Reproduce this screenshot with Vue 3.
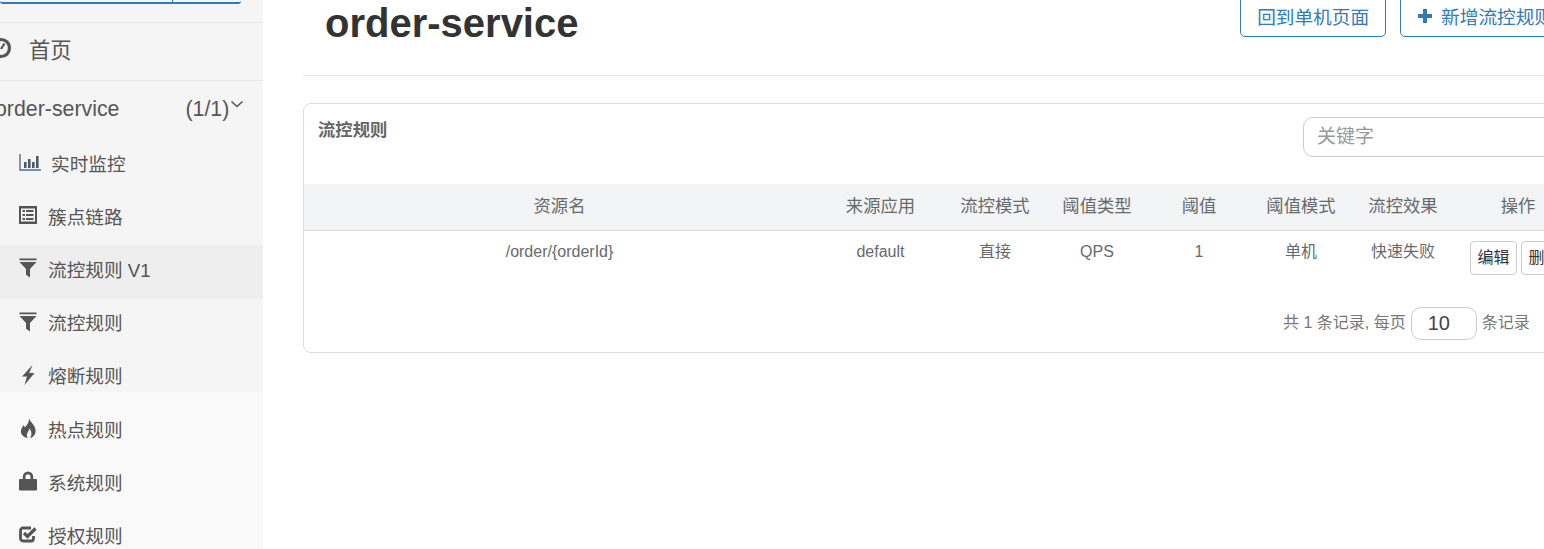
<script setup>
const nav = [
  { label: '实时监控', icon: 'stats' },
  { label: '簇点链路', icon: 'list' },
  { label: '流控规则 V1', icon: 'filter', active: true },
  { label: '流控规则', icon: 'filter' },
  { label: '熔断规则', icon: 'flash' },
  { label: '热点规则', icon: 'fire' },
  { label: '系统规则', icon: 'lock' },
  { label: '授权规则', icon: 'check' },
]
const cols = ['资源名', '来源应用', '流控模式', '阈值类型', '阈值', '阈值模式', '流控效果', '操作']
const row = ['/order/{orderId}', 'default', '直接', 'QPS', '1', '单机', '快速失败']
</script>

<template>
  <div class="page">
    <aside class="side">
      <div class="search"><span class="search-end"></span></div>
      <div class="home">
        <svg class="home-ico" viewBox="0 0 22 22"><circle cx="11" cy="11" r="8.500" fill="none" stroke="#555" stroke-width="3.200"/><path d="M11 12 L14.500 6.500" stroke="#555" stroke-width="2.200"/><circle cx="6.500" cy="10" r="1.200" fill="#555"/></svg>
        <span>首页</span>
      </div>
      <div class="app">
        <span>order-service</span>
        <span class="count">(1/1)</span>
        <svg class="chev" viewBox="0 0 14 8"><path d="M1.500 1.500 L7 6.500 L12.500 1.500" fill="none" stroke="#555" stroke-width="1.600"/></svg>
      </div>
      <div class="nav">
        <div v-for="n in nav" :key="n.label" class="item" :class="{ active: n.active, first: n.icon === 'stats' }">
          <span class="ico-box">
            <svg v-if="n.icon === 'stats'" viewBox="0 0 22 18" class="ico wide"><path d="M1 1 V17 H22" fill="none" stroke="#4a6f8f" stroke-width="1.400"/><path d="M5 9h2.600v6H5zM9 6h2.600v9H9zM13 9h2.600v6H13zM17 3h2.600v12H17z" fill="#4d5a68"/></svg>
            <svg v-else-if="n.icon === 'list'" viewBox="0 0 18 18" class="ico"><path fill-rule="evenodd" d="M0 0h18v18H0zM2 2.500v13h14v-13z" fill="#555"/><path d="M3.500 4h2.500v2H3.500zM7 4h7.500v2H7zM3.500 8h2.500v2H3.500zM7 8h7.500v2H7zM3.500 12h2.500v2H3.500zM7 12h7.500v2H7z" fill="#555"/></svg>
            <svg v-else-if="n.icon === 'filter'" viewBox="0 0 18 19" class="ico tall"><path d="M0.500 0h17v1.800H0.500zM0.500 3.500h17L11 10.500v8.500l-4-2.800V10.500z" fill="#555"/></svg>
            <svg v-else-if="n.icon === 'flash'" viewBox="0 0 18 20" class="ico tall"><path d="M13.500 0 L3 11.500 H8 L5.500 20 L15.500 8 H10.200z" fill="#555"/></svg>
            <svg v-else-if="n.icon === 'fire'" viewBox="0 0 18 21" class="ico tall"><path d="M10 0 C11 4.500 17 7 17 13.500 C17 18 13.500 21 11 21 C13.500 18 13 14 10.300 11 C10 14 7.800 15.500 7.800 18 C7.800 19.300 8.300 20.300 9 21 C4.500 20.500 1.500 17.500 1.500 14 C1.500 11 3.500 9.500 4.200 7.500 C5.200 8.200 5.500 9 5.700 10 C7.800 7.500 10.500 4.500 10 0z" fill="#555"/></svg>
            <svg v-else-if="n.icon === 'lock'" viewBox="0 0 18 19" class="ico tall"><path fill-rule="evenodd" d="M3.800 7.500V5.200a5.200 5.200 0 0 1 10.400 0v2.300h2.800a1 1 0 0 1 1 1V18a1 1 0 0 1-1 1H1a1 1 0 0 1-1-1V8.500a1 1 0 0 1 1-1zM6.500 7.500h5V5.200a2.500 2.500 0 0 0-5 0z" fill="#555"/></svg>
            <svg v-else viewBox="0 0 18 18" class="ico"><path d="M14.500 11v2.500a2.500 2.500 0 0 1-2.500 2.500H4a2.500 2.500 0 0 1-2.500-2.500V5.500A2.500 2.500 0 0 1 4 3h8" fill="none" stroke="#555" stroke-width="2.800"/><path d="M5 8 L8.500 11.500 L16.500 3.500" fill="none" stroke="#555" stroke-width="3.200"/></svg>
          </span>
          <span>{{ n.label }}</span>
        </div>
      </div>
    </aside>

    <main class="main">
      <header class="head">
        <h1 class="title">order-service</h1>
        <div class="actions">
          <button class="btn">回到单机页面</button>
          <button class="btn">
            <svg class="plus" viewBox="0 0 16 16"><path d="M6 1h4v5h5v4h-5v5H6v-5H1V6h5z" fill="#337ab7"/></svg>
            新增流控规则
          </button>
        </div>
      </header>

      <section class="card">
        <div class="card-top">
          <h2 class="card-title">流控规则</h2>
          <div class="kw">关键字</div>
        </div>
        <table class="tbl">
          <colgroup>
            <col class="c1" /><col class="c2" /><col class="c3" /><col class="c4" />
            <col class="c4" /><col class="c4" /><col class="c4" /><col class="c8" />
          </colgroup>
          <thead>
            <tr><th v-for="c in cols" :key="c">{{ c }}</th></tr>
          </thead>
          <tbody>
            <tr>
              <td v-for="c in row" :key="c">{{ c }}</td>
              <td class="ops"><button class="mini">编辑</button><button class="mini">删除</button></td>
            </tr>
          </tbody>
        </table>
        <div class="pager">
          <span>共 1 条记录, 每页</span>
          <span class="size">10</span>
          <span>条记录</span>
        </div>
      </section>
    </main>
  </div>
</template>

<style scoped>
.page {
  display: flex;
  width: 1544px;
  height: 549px;
  overflow: hidden;
  background: #fff;
  font-family: "Liberation Sans", "Noto Sans CJK SC", sans-serif;
  color: #676a6c;
}
.side {
  flex: 0 0 263px;
  width: 263px;
  height: 549px;
  overflow: hidden;
  background: linear-gradient(#f5f5f5 392px, #f9f9f9 392px);
  color: #555;
}
.search {
  height: 2px;
  width: 241px;
  border-bottom: 2px solid #337ab7;
  border-radius: 0 0 3px 3px;
  margin-bottom: 18px;
  position: relative;
}
.search-end {
  position: absolute;
  left: 172px;
  top: 0;
  width: 1px;
  height: 2px;
  background: #337ab7;
}
.home {
  height: 57px;
  border-top: 1px solid #e7e7e7;
  border-bottom: 1px solid #e7e7e7;
  display: flex;
  align-items: center;
  font-size: 21.33px;
  gap: 17px;
}
.home > span { padding-bottom: 7px; }
.home-ico {
  width: 22px;
  height: 22px;
  margin-left: -10px;
  margin-top: -7px;
}
.app {
  height: 58px;
  display: flex;
  align-items: center;
  font-size: 21.33px;
  margin-left: -5px;
  padding-bottom: 2px;
  box-sizing: border-box;
}
.count { margin-left: 66px; }
.chev { width: 14px; height: 8px; margin-top: -10px; margin-left: 1px; }
.nav { display: flex; flex-direction: column; }
.item {
  height: 53.200px;
  display: flex;
  align-items: center;
  padding: 0 0 7px 19px;
  font-size: 18.670px;
  box-sizing: border-box;
}
.item.active { background: #eee; }
.item.first .ico-box { width: 32px; }
.ico-box { width: 29px; display: flex; align-items: center; }
.ico { width: 18px; height: 18px; }
.ico.wide { width: 22px; }
.ico.tall { height: 20px; }
.main {
  flex: 0 0 1290px;
  width: 1290px;
  margin-left: 40px;
}
.head {
  height: 75px;
  display: flex;
  align-items: flex-start;
  border-bottom: 1px solid #e7e7e7;
  padding-left: 22px;
  margin-bottom: 27px;
}
.title {
  margin: 1px 0 0;
  font-size: 40px;
  line-height: 44px;
  font-weight: 700;
  color: #333;
  flex: 1;
}
.actions { display: flex; gap: 14px; margin-top: -6px; margin-right: 23px; }
.btn {
  height: 43px;
  padding: 0 16px;
  border: 1px solid #337ab7;
  border-radius: 5px;
  background: #fff;
  color: #337ab7;
  font: inherit;
  font-size: 18.670px;
  display: flex;
  align-items: center;
  gap: 8px;
  white-space: nowrap;
}
.plus { width: 16px; height: 16px; }
.card {
  border: 1px solid #ddd;
  border-radius: 8px;
  height: 250px;
  box-sizing: border-box;
}
.card-top { height: 80px; position: relative; }
.card-title {
  margin: 0;
  padding: 14px 0 0 14px;
  font-size: 17.330px;
  line-height: 24px;
  font-weight: 700;
  color: #666;
}
.kw {
  position: absolute;
  left: 999px;
  top: 13px;
  width: 280px;
  height: 40px;
  box-sizing: border-box;
  border: 1px solid #ccc;
  border-radius: 10px;
  padding-left: 13px;
  font-size: 19px;
  line-height: 37px;
  color: #999;
}
.tbl {
  width: 1278px;
  table-layout: fixed;
  border-collapse: collapse;
  font-size: 16px;
}
.c1 { width: 511px; }
.c2 { width: 131px; }
.c3 { width: 100px; }
.c4 { width: 102px; }
.c8 { width: 128px; }
.tbl th {
  height: 46px;
  padding: 0 0 5px;
  box-sizing: border-box;
  background: #f3f4f6;
  border-bottom: 1px solid #ddd;
  font-size: 17.330px;
  font-weight: 400;
  text-align: center;
  color: #676a6c;
}
.tbl th:nth-child(3) { padding-right: 2px; }
.tbl td {
  height: 58px;
  vertical-align: top;
  padding: 10px 0 0;
  text-align: center;
  color: #676a6c;
  line-height: 22px;
}
.tbl td:nth-child(3) { padding-right: 2px; }
.tbl td.ops { padding: 10px 0 0 16px; text-align: left; white-space: nowrap; }
.mini {
  height: 34px;
  width: 47px;
  padding: 0;
  margin-right: 4px;
  border: 1px solid #ccc;
  border-radius: 4px;
  background: #fff;
  color: #333;
  font: inherit;
  font-size: 16px;
}
.pager {
  display: flex;
  align-items: center;
  height: 34px;
  padding-left: 979px;
  margin-top: 8px;
  font-size: 16px;
  color: #777;
  gap: 5px;
}
.pager > span:not(.size) { padding-bottom: 5px; }
.size {
  width: 66px;
  height: 33px;
  box-sizing: border-box;
  border: 1px solid #ccc;
  border-radius: 10px;
  padding-left: 16px;
  font-size: 20px;
  line-height: 31px;
  color: #444;
}
</style>
